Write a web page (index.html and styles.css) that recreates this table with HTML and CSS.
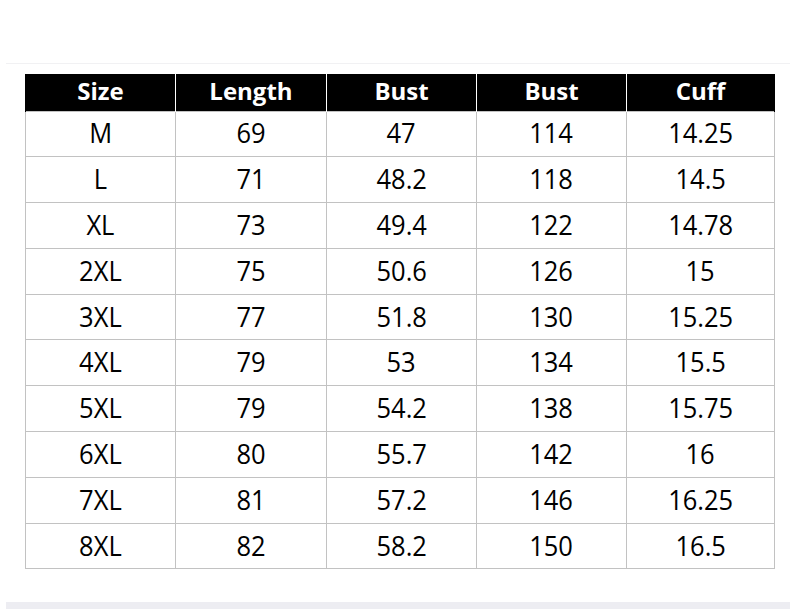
FILE: index.html
```html
<!DOCTYPE html>
<html>
<head>
<meta charset="utf-8">
<link rel="stylesheet" href="styles.css">
</head>
<body>
<div class="page">
  <div class="topline"></div>
  <table class="sizes">
    <colgroup>
      <col class="c1"><col class="c2"><col class="c3"><col class="c4"><col class="c5">
    </colgroup>
    <thead>
      <tr><th>Size</th><th>Length</th><th>Bust</th><th>Bust</th><th>Cuff</th></tr>
    </thead>
    <tbody>
      <tr><td><span>M</span></td><td><span>69</span></td><td><span>47</span></td><td><span>114</span></td><td><span>14.25</span></td></tr>
      <tr><td><span>L</span></td><td><span>71</span></td><td><span>48.2</span></td><td><span>118</span></td><td><span>14.5</span></td></tr>
      <tr><td><span>XL</span></td><td><span>73</span></td><td><span>49.4</span></td><td><span>122</span></td><td><span>14.78</span></td></tr>
      <tr><td><span>2XL</span></td><td><span>75</span></td><td><span>50.6</span></td><td><span>126</span></td><td><span>15</span></td></tr>
      <tr><td><span>3XL</span></td><td><span>77</span></td><td><span>51.8</span></td><td><span>130</span></td><td><span>15.25</span></td></tr>
      <tr><td><span>4XL</span></td><td><span>79</span></td><td><span>53</span></td><td><span>134</span></td><td><span>15.5</span></td></tr>
      <tr><td><span>5XL</span></td><td><span>79</span></td><td><span>54.2</span></td><td><span>138</span></td><td><span>15.75</span></td></tr>
      <tr><td><span>6XL</span></td><td><span>80</span></td><td><span>55.7</span></td><td><span>142</span></td><td><span>16</span></td></tr>
      <tr><td><span>7XL</span></td><td><span>81</span></td><td><span>57.2</span></td><td><span>146</span></td><td><span>16.25</span></td></tr>
      <tr><td><span>8XL</span></td><td><span>82</span></td><td><span>58.2</span></td><td><span>150</span></td><td><span>16.5</span></td></tr>
    </tbody>
  </table>
  <div class="bottomband"></div>
</div>
</body>
</html>
```
FILE: styles.css
```css
html, body {
  margin: 0;
  padding: 0;
  background: #ffffff;
}
.page {
  width: 790px;
  height: 609px;
  display: flex;
  flex-direction: column;
  font-family: "Open Sans", "Noto Sans", sans-serif;
  overflow: hidden;
}
.topline {
  margin-top: 63px;
  height: 1px;
  background: #f1f1f3;
  margin-left: 6px;
}
.sizes {
  margin-top: 10px;
  margin-left: 25px;
  width: 749px;
  border-collapse: collapse;
  table-layout: fixed;
}
.c1 { width: 150px; }
.c2 { width: 151px; }
.c3 { width: 150px; }
.c4 { width: 150px; }
.c5 { width: 148px; }
.sizes th {
  background: #000000;
  color: #ffffff;
  font-weight: 700;
  font-size: 24px;
  height: 37px;
  padding: 0 0 3px 0;
  border-left: 1px solid #ffffff;
  line-height: 1;
  box-sizing: border-box;
}
.sizes th:first-child {
  border-left: 1px solid #000000;
}
.sizes th:last-child {
  border-right: 1px solid #000000;
}
.sizes td {
  border: 1px solid #c2c2c2;
  text-align: center;
  font-size: 28px;
  color: #000000;
  height: 45.8px;
  padding: 0 0 3px 0;
  line-height: 1;
  box-sizing: border-box;
}
.sizes td span {
  display: inline-block;
  transform: scaleX(0.91);
}
.bottomband {
  margin-top: auto;
  height: 7px;
  background: #ededf2;
  margin-left: 6px;
}
```
